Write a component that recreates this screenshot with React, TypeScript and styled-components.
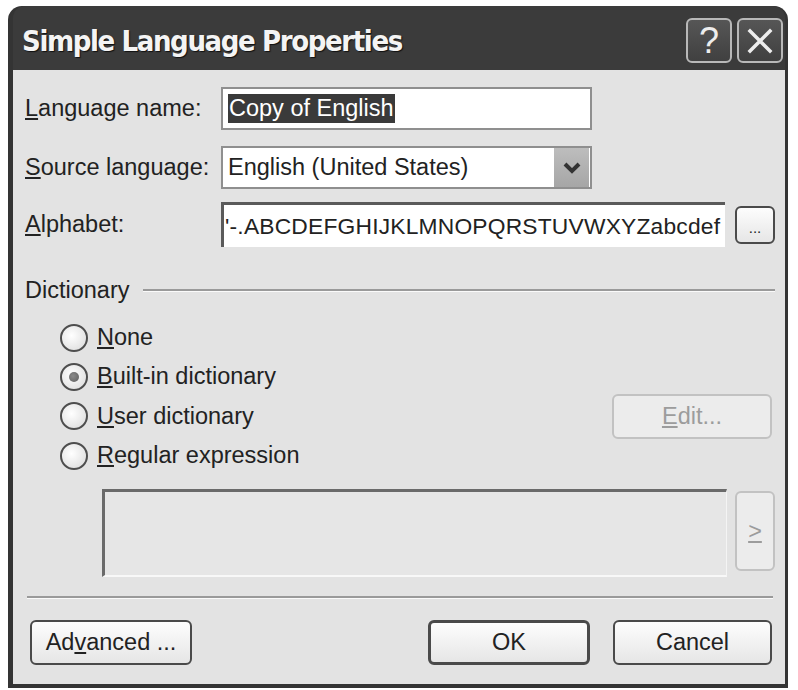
import React from 'react'
import styled, { createGlobalStyle } from 'styled-components'

const GlobalStyle = createGlobalStyle`
  html, body {
    margin: 0;
    padding: 0;
    background: #ffffff;
  }
  body {
    font-family: "Liberation Sans", Arial, sans-serif;
    color: #222;
  }
  * { box-sizing: border-box; }
`

const Page = styled.div`
  width: 798px;
  height: 690px;
  padding: 6px 0 0 8px;
`

const Window = styled.div`
  width: 780px;
  height: 682px;
  background: #343434;
  border-radius: 14px 14px 0 0;
  padding: 0 3px 4px 5px;
  display: flex;
  flex-direction: column;
`

const TitleBar = styled.div`
  height: 64px;
  flex: none;
  display: flex;
  align-items: center;
  justify-content: space-between;
  padding: 0 2px 0 9px;
  background: #3b3b3b;
  border-radius: 12px 12px 0 0;
`

const Title = styled.div`
  font-family: "DejaVu Sans Condensed", "DejaVu Sans", sans-serif;
  font-weight: bold;
  font-size: 29px;
  letter-spacing: -1.4px;
  color: #f4f4f4;
  text-shadow: 1px 1px 1px #111;
  padding-top: 6px;
`

const CaptionButtons = styled.div`
  display: flex;
  gap: 5px;
  margin-top: 5px;
`

const CaptionButton = styled.div`
  width: 46px;
  height: 45px;
  border: 2px solid #b8b8b8;
  border-radius: 6px;
  background: linear-gradient(#565656, #404040);
  display: flex;
  align-items: center;
  justify-content: center;
  color: #ededed;
  font-family: "Liberation Sans", Arial, sans-serif;
  font-size: 36px;
`

const Body = styled.div`
  flex: 1;
  background: #e3e3e3;
  padding: 17px 10px 17px 12px;
  display: flex;
  flex-direction: column;
  font-size: 23.5px;
`

const FormGrid = styled.div`
  display: grid;
  grid-template-columns: 196px auto;
  align-items: center;
`

const Label = styled.div<{ $top?: number }>`
  margin-top: ${p => p.$top ?? 0}px;
  white-space: nowrap;
`

const Cell = styled.div<{ $top?: number }>`
  margin-top: ${p => p.$top ?? 0}px;
  display: flex;
  align-items: center;
  gap: 10px;
`

const TextBox = styled.div<{ $w: number }>`
  width: ${p => p.$w}px;
  height: 43px;
  background: #fff;
  border: 2px solid #8f8f8f;
  display: flex;
  align-items: center;
  padding-left: 5px;
  white-space: nowrap;
  overflow: hidden;
`

const SunkenBox = styled(TextBox)`
  height: 45px;
  border-width: 3px 0 0 3px;
  border-color: #5a5a5a;
  padding-left: 1px;
  font-size: 22.8px;
  letter-spacing: 0.2px;
`

const Selected = styled.span`
  background: #3a3a3a;
  color: #fff;
  padding: 1px 1px;
`

const DropArrow = styled.div`
  margin-left: auto;
  width: 35px;
  height: 39px;
  margin-right: 1px;
  background: linear-gradient(#bdbdbd, #a6a6a6);
  display: flex;
  align-items: center;
  justify-content: center;
`

const Button = styled.div<{ $w: number; $h?: number; $disabled?: boolean; $default?: boolean }>`
  width: ${p => p.$w}px;
  height: ${p => p.$h ?? 45}px;
  flex: none;
  border: ${p => (p.$default ? 3 : 2)}px solid ${p => (p.$disabled ? '#c2c2c2' : '#4a4a4a')};
  border-radius: 6px;
  background: ${p => (p.$disabled ? '#ececec' : 'linear-gradient(#fdfdfd, #e6e6e6)')};
  color: ${p => (p.$disabled ? '#9c9c9c' : '#222')};
  display: flex;
  align-items: center;
  justify-content: center;
  white-space: nowrap;
`

const DotsButton = styled(Button)`
  font-size: 15px;
  align-items: flex-end;
  padding-bottom: 6px;
`

const GroupHeader = styled.div`
  margin-top: 30px;
  display: flex;
  align-items: center;
  gap: 14px;
`

const EtchedLine = styled.div`
  flex: 1;
  height: 3px;
  border-top: 2px solid #9a9a9a;
  border-bottom: 1px solid #fafafa;
`

const RadioList = styled.div`
  margin-top: 14px;
  padding-left: 35px;
  display: flex;
  flex-direction: column;
`

const RadioRow = styled.div`
  height: 39.3px;
  display: flex;
  align-items: center;
  gap: 9px;
`

const RadioCircle = styled.div<{ $checked?: boolean }>`
  width: 28px;
  height: 28px;
  border-radius: 50%;
  border: 2px solid #4e4e4e;
  background: radial-gradient(circle at 40% 40%, #ffffff, #d9d9d9);
  display: flex;
  align-items: center;
  justify-content: center;
  &::after {
    content: '';
    display: ${p => (p.$checked ? 'block' : 'none')};
    width: 10px;
    height: 10px;
    border-radius: 50%;
    background: radial-gradient(circle at 40% 40%, #8a8a8a, #5e5e5e);
  }
`

const EditButton = styled(Button)`
  margin-left: auto;
  margin-right: 3px;
`

const ExprRow = styled.div`
  margin-top: 14px;
  padding-left: 77px;
  display: flex;
  gap: 8px;
  align-items: flex-start;
`

const ExprBox = styled.div`
  width: 625px;
  height: 88px;
  border-style: solid;
  border-width: 3px 1px 2px 3px;
  border-color: #6a6a6a #f4f4f4 #f8f8f8 #6a6a6a;
  background: #e6e6e6;
`

const ArrowButton = styled(Button)`
  margin-top: 2px;
`

const Separator = styled(EtchedLine)`
  flex: none;
  margin: 19px 2px 0 2px;
`

const ButtonBar = styled.div`
  margin-top: 21px;
  display: flex;
  align-items: center;
  padding: 0 3px 0 5px;
  gap: 23px;
`

const Spacer = styled.div`
  flex: 1;
`

const App = () => {
  return (
    <Page>
      <GlobalStyle />
      <Window>
        <TitleBar>
          <Title>Simple Language Properties</Title>
          <CaptionButtons>
            <CaptionButton>?</CaptionButton>
            <CaptionButton>
              <svg width="28" height="28" viewBox="0 0 28 28">
                <path d="M4 4 L24 24 M24 4 L4 24" stroke="#ededed" strokeWidth="3.5" strokeLinecap="square" />
              </svg>
            </CaptionButton>
          </CaptionButtons>
        </TitleBar>
        <Body>
          <FormGrid>
            <Label>
              <u>L</u>anguage name:
            </Label>
            <Cell>
              <TextBox $w={371}>
                <Selected>Copy of English</Selected>
              </TextBox>
            </Cell>
            <Label $top={16}>
              <u>S</u>ource language:
            </Label>
            <Cell $top={16}>
              <TextBox $w={371}>
                English (United States)
                <DropArrow>
                  <svg width="18" height="12" viewBox="0 0 18 12">
                    <path d="M2 2 L9 9 L16 2" fill="none" stroke="#333" strokeWidth="4" />
                  </svg>
                </DropArrow>
              </TextBox>
            </Cell>
            <Label $top={13}>
              <u>A</u>lphabet:
            </Label>
            <Cell $top={13}>
              <SunkenBox $w={504}>'-.ABCDEFGHIJKLMNOPQRSTUVWXYZabcdef</SunkenBox>
              <DotsButton $w={40} $h={38}>...</DotsButton>
            </Cell>
          </FormGrid>

          <GroupHeader>
            Dictionary
            <EtchedLine />
          </GroupHeader>

          <RadioList>
            <RadioRow>
              <RadioCircle />
              <span>
                <u>N</u>one
              </span>
            </RadioRow>
            <RadioRow>
              <RadioCircle $checked />
              <span>
                <u>B</u>uilt-in dictionary
              </span>
            </RadioRow>
            <RadioRow>
              <RadioCircle />
              <span>
                <u>U</u>ser dictionary
              </span>
              <EditButton $w={160} $disabled>
                <span>
                  <u>E</u>dit...
                </span>
              </EditButton>
            </RadioRow>
            <RadioRow>
              <RadioCircle />
              <span>
                <u>R</u>egular expression
              </span>
            </RadioRow>
          </RadioList>

          <ExprRow>
            <ExprBox />
            <ArrowButton $w={40} $h={80} $disabled>
              <u>&gt;</u>
            </ArrowButton>
          </ExprRow>

          <Separator />

          <ButtonBar>
            <Button $w={162}>
              <span>
                Ad<u>v</u>anced ...
              </span>
            </Button>
            <Spacer />
            <Button $w={162} $default>
              OK
            </Button>
            <Button $w={159}>Cancel</Button>
          </ButtonBar>
        </Body>
      </Window>
    </Page>
  )
}

export default App
